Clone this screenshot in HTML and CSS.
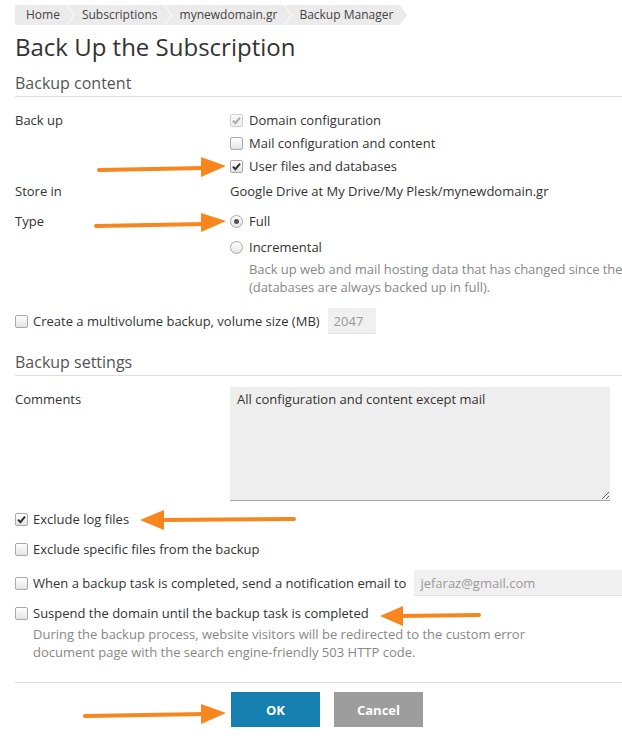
FILE: index.html
```html
<!DOCTYPE html>
<html lang="en">
<head>
    <meta charset="UTF-8">
    <meta name="viewport" content="width=device-width, initial-scale=1.0">
    <title>Back Up the Subscription</title>

    <link rel="stylesheet" href="styles.css">

</head>
<body>

<div class="page">

    <div class="crumbs">
        <span class="crumb first">Home</span>
        <span class="crumb">Subscriptions</span>
        <span class="crumb">mynewdomain.gr</span>
        <span class="crumb">Backup Manager</span>
    </div>

    <h1>Back Up the Subscription</h1>

    <h2 class="section">Backup content</h2>

    <div class="row row-backup">
        <div class="label">Back up</div>
        <div class="field">
            <label class="opt"><span class="box on off"><svg viewBox="0 0 13 13"><path d="M3 6.6 L5.4 9.2 L10 3.6"/></svg></span>Domain configuration</label>
            <label class="opt"><span class="box"></span>Mail configuration and content</label>
            <label class="opt"><span class="box on"><svg viewBox="0 0 13 13"><path d="M3 6.6 L5.4 9.2 L10 3.6"/></svg></span>User files and databases</label>
        </div>
    </div>

    <div class="row row-store">
        <div class="label">Store in</div>
        <div class="field">Google Drive at My Drive/My Plesk/mynewdomain.gr</div>
    </div>

    <div class="row row-type">
        <div class="label">Type</div>
        <div class="field">
            <label class="opt"><span class="radio on"></span>Full</label>
            <label class="opt opt-incr"><span class="radio"></span>Incremental</label>
            <p class="hint hint-type">Back up web and mail hosting data that has changed since the<br>(databases are always backed up in full).</p>
        </div>
    </div>

    <div class="line-opt row-multi">
        <span class="box"></span>Create a multivolume backup, volume size (MB)
        <input class="small-input vol" type="text" value="2047" disabled>
    </div>

    <h2 class="section section-2">Backup settings</h2>

    <div class="row row-comments">
        <div class="label label-top">Comments</div>
        <div class="field">
            <textarea class="comments">All configuration and content except mail</textarea>
        </div>
    </div>

    <div class="line-opt row-log"><span class="box on"><svg viewBox="0 0 13 13"><path d="M3 6.6 L5.4 9.2 L10 3.6"/></svg></span>Exclude log files</div>

    <div class="line-opt row-specific"><span class="box"></span>Exclude specific files from the backup</div>

    <div class="line-opt row-notify">
        <span class="box"></span>When a backup task is completed, send a notification email to
        <input class="small-input email" type="text" value="jefaraz@gmail.com" disabled>
    </div>

    <div class="line-opt row-suspend"><span class="box"></span>Suspend the domain until the backup task is completed</div>
    <p class="hint hint-suspend">During the backup process, website visitors will be redirected to the custom error<br>document page with the search engine-friendly 503 HTTP code.</p>

    <div class="row buttons">
        <div></div>
        <div class="field btn-group">
            <button class="btn btn-ok">OK</button>
            <button class="btn btn-cancel">Cancel</button>
        </div>
    </div>

</div>

<!-- orange arrows drawn over the screenshot -->
<svg class="arrows" width="622" height="738" viewBox="0 0 622 738">
    <g stroke="#f7861e" stroke-width="4" stroke-linecap="round" fill="none">
        <line x1="99" y1="170" x2="205" y2="168"/>
        <line x1="96" y1="226" x2="205" y2="224"/>
        <line x1="160" y1="520" x2="294" y2="519"/>
        <line x1="400" y1="616" x2="479" y2="615"/>
        <line x1="85" y1="716" x2="205" y2="714"/>
    </g>
    <g fill="#f7861e">
        <polygon points="201,157 226,166 201,177"/>
        <polygon points="201,213 226,221 201,232"/>
        <polygon points="164,510 140,520 164,530"/>
        <polygon points="403,606 380,616 403,626"/>
        <polygon points="201,704 226,713 201,724"/>
    </g>
</svg>

</body>
</html>
```

FILE: styles.css
```css
html, body {
    overflow: hidden;
}

body {
    margin: 0;
    background-color: #fff;
    color: #333;
    font-family: "Open Sans", "Liberation Sans", Arial, sans-serif;
    font-size: 13px;
    line-height: 18px;
    position: relative;
}

.page {
    width: 720px;
    padding-left: 15px;
}

/* breadcrumbs */
.crumbs {
    display: flex;
    margin-top: 5px;
    height: 20px;
}

.crumb {
    background-color: #ebebeb;
    color: #444;
    font-size: 12px;
    line-height: 20px;
    padding: 0 14px 0 15px;
    margin-left: -7px;
    clip-path: polygon(0 0, calc(100% - 8px) 0, 100% 50%, calc(100% - 8px) 100%, 0 100%, 8px 50%);
}

.crumb.first {
    margin-left: 0;
    padding-left: 11px;
    clip-path: polygon(0 0, calc(100% - 8px) 0, 100% 50%, calc(100% - 8px) 100%, 0 100%);
}

h1 {
    font-size: 24px;
    font-weight: 400;
    line-height: 32px;
    margin: 6px 0 0;
    color: #333;
}

.section {
    font-size: 16px;
    font-weight: 400;
    line-height: 22px;
    color: #555;
    margin: 9px 0 0;
    padding-bottom: 2px;
    border-bottom: 1px solid #ddd;
}

.section-2 {
    margin-top: 17px;
}

/* form rows */
.row {
    display: grid;
    grid-template-columns: 215px 1fr;
}

.field {
    display: flex;
    flex-direction: column;
    align-items: flex-start;
}

.row-backup { margin-top: 14px; }
.row-store { margin-top: 7px; }
.row-type { margin-top: 12px; }
.row-comments { margin-top: 11px; }

.label-top {
    padding-top: 3px;
}

.opt {
    display: flex;
    align-items: center;
    height: 18px;
}

.opt + .opt {
    margin-top: 5px;
}

.opt + .opt-incr {
    margin-top: 8px;
}

.hint {
    color: #888;
    margin: 4px 0 0 19px;
}

.hint-type {
    letter-spacing: -0.05px;
}

.hint-suspend {
    margin: 3px 0 0 18px;
}

/* checkbox + radio */
.box,
.radio {
    flex: none;
    display: inline-block;
    box-sizing: border-box;
    width: 13px;
    height: 13px;
    border: 1px solid #a9a9a9;
    background: linear-gradient(#ffffff, #e4e4e4);
    margin-right: 6px;
    position: relative;
}

.box {
    border-radius: 2px;
}

.box svg {
    position: absolute;
    left: -1px;
    top: -1px;
    width: 13px;
    height: 13px;
}

.box svg path {
    fill: none;
    stroke: #333;
    stroke-width: 2;
}

.box.off {
    border-color: #cfcfcf;
    background: linear-gradient(#fafafa, #efefef);
}

.box.off svg path {
    stroke: #aaa;
}

.radio {
    border-radius: 50%;
}

.radio.on::after {
    content: "";
    position: absolute;
    left: 3px;
    top: 3px;
    width: 5px;
    height: 5px;
    border-radius: 50%;
    background-color: #555;
}

/* lines with checkbox at the left */
.line-opt {
    display: flex;
    align-items: center;
    height: 18px;
}

.line-opt .box {
    margin-right: 5px;
}

.row-multi {
    margin-top: 12px;
    height: 26px;
}

.row-log { margin-top: 9px; }
.row-specific { margin-top: 12px; }

.row-notify {
    margin-top: 12px;
    height: 26px;
}

.row-suspend { margin-top: 8px; }

.small-input {
    box-sizing: border-box;
    height: 26px;
    border: none;
    border-bottom: 1px solid #e2e2e2;
    background-color: #f0f0f0;
    color: #999;
    font-family: inherit;
    font-size: 13px;
    padding: 0 6px;
    margin-left: 8px;
}

.vol {
    width: 48px;
}

.email {
    width: 230px;
}

.comments {
    box-sizing: border-box;
    width: 380px;
    height: 114px;
    border: none;
    border-bottom: 1px solid #a8a8a8;
    background-color: #eeeeee;
    color: #333;
    font-family: inherit;
    font-size: 13px;
    line-height: 18px;
    padding: 3px 7px;
    margin: 0;
}

/* buttons */
.buttons {
    margin-top: 21px;
    border-top: 1px solid #ddd;
    padding-top: 9px;
}

.btn-group {
    flex-direction: row;
    gap: 14px;
    padding-left: 1px;
}

.btn {
    width: 89px;
    height: 35px;
    border: none;
    color: #fff;
    font-family: inherit;
    font-size: 13px;
    font-weight: 700;
    cursor: pointer;
}

.btn-ok {
    background-color: #157fb0;
}

.btn-cancel {
    background-color: #9d9d9d;
}

.arrows {
    position: absolute;
    left: 0;
    top: 0;
    pointer-events: none;
}
```
